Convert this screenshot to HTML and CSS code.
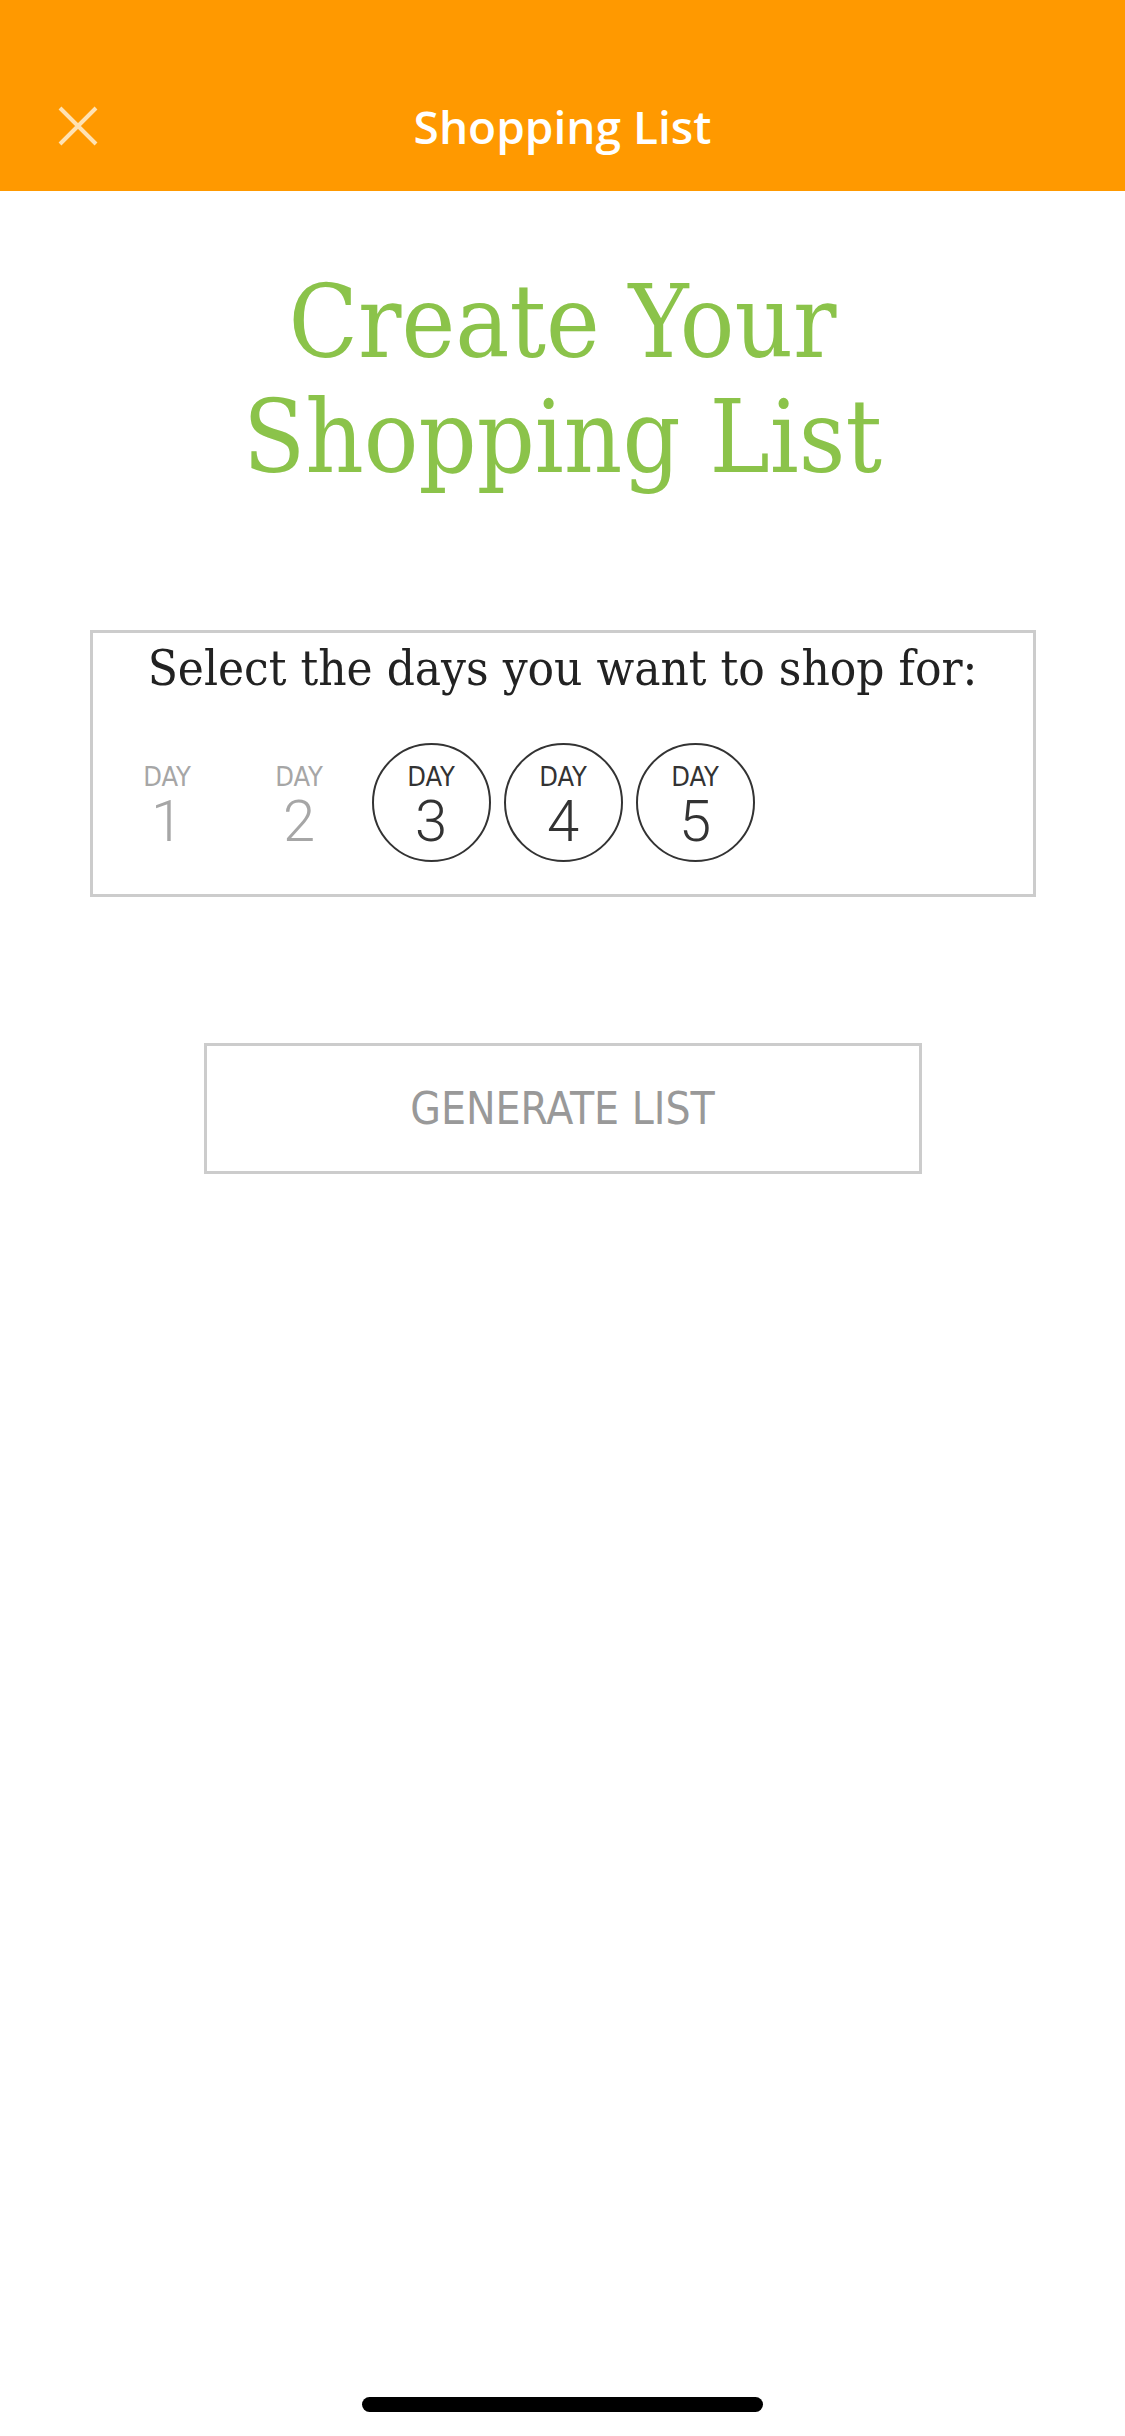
FILE: index.html
```html
<!DOCTYPE html>
<html lang="en">
<head>
<meta charset="utf-8">
<title>Shopping List</title>
<link rel="stylesheet" href="styles.css">
</head>
<body>
<div class="screen">
  <header class="topbar">
    <button class="close" aria-label="Close">
      <svg viewBox="0 0 42 42" width="42" height="42"><path d="M3 3 L39 39 M39 3 L3 39" stroke="currentColor" stroke-width="4" fill="none"/></svg>
    </button>
    <h1 class="topbar-title">Shopping List</h1>
    <span class="topbar-spacer"></span>
  </header>

  <main class="content">
    <h2 class="headline">Create Your<br>Shopping List</h2>

    <section class="days-card">
      <p class="days-prompt">Select the days you want to shop for:</p>
      <div class="days">
        <div class="day"><span class="day-label">DAY</span><span class="day-num">1</span></div>
        <div class="day"><span class="day-label">DAY</span><span class="day-num">2</span></div>
        <div class="day day-selected"><span class="day-label">DAY</span><span class="day-num">3</span></div>
        <div class="day day-selected"><span class="day-label">DAY</span><span class="day-num">4</span></div>
        <div class="day day-selected"><span class="day-label">DAY</span><span class="day-num">5</span></div>
      </div>
    </section>

    <button class="generate">GENERATE LIST</button>
  </main>

  <div class="home-indicator"></div>
</div>
</body>
</html>
```

FILE: styles.css
```css
* { box-sizing: border-box; }

html, body {
  margin: 0;
  padding: 0;
  background: #fff;
}

.screen {
  width: 1125px;
  min-height: 2436px;
  display: flex;
  flex-direction: column;
  background: #fff;
}

.topbar {
  height: 191px;
  padding-top: 60px;
  background: #FF9900;
  display: grid;
  grid-template-columns: 1fr auto 1fr;
  align-items: center;
}

.close {
  justify-self: start;
  display: flex;
  padding: 0 0 0 57px;
  margin: 0;
  border: none;
  background: none;
  color: #FFE2B3;
}

.topbar-title {
  margin: 0;
  font-family: "Open Sans", "Lato", sans-serif;
  font-weight: 600;
  font-size: 46px;
  line-height: 60px;
  color: #fff;
}

.content {
  display: flex;
  flex-direction: column;
  align-items: center;
}

.headline {
  margin: 74px 0 0;
  font-family: "DejaVu Serif Condensed", "DejaVu Serif", serif;
  font-weight: normal;
  font-size: 101px;
  line-height: 115px;
  color: #8BC34A;
  text-align: center;
}

.days-card {
  margin-top: 135px;
  width: 946px;
  height: 267px;
  border: 3px solid #CCCCCC;
  display: flex;
  flex-direction: column;
  align-items: flex-start;
}

.days-prompt {
  align-self: stretch;
  margin: 6px 0 0;
  font-family: "DejaVu Serif Condensed", "DejaVu Serif", serif;
  font-size: 49px;
  line-height: 60px;
  color: #222;
  text-align: center;
}

.days {
  display: flex;
  gap: 13px;
  margin-top: 44px;
  padding-left: 15px;
}

.day {
  width: 119px;
  height: 119px;
  padding-top: 6px;
  border: 2.5px solid transparent;
  border-radius: 50%;
  display: flex;
  flex-direction: column;
  align-items: center;
  justify-content: center;
  color: #A6A6A6;
}

.day-selected {
  border-color: #333;
  color: #333;
}

.day-label {
  margin-bottom: 3px;
  font-family: "DejaVu Sans Condensed", "DejaVu Sans", sans-serif;
  font-stretch: condensed;
  font-size: 27px;
  line-height: 28px;
}

.day-num {
  font-family: "Roboto", sans-serif;
  font-weight: 300;
  font-size: 58px;
  line-height: 55px;
}

.generate {
  margin-top: 146px;
  width: 718px;
  height: 131px;
  border: 3px solid #CCCCCC;
  background: #fff;
  font-family: "DejaVu Sans Condensed", "DejaVu Sans", sans-serif;
  font-stretch: condensed;
  font-size: 44px;
  color: #999;
  padding: 0;
}

.home-indicator {
  margin-top: auto;
  margin-bottom: 24px;
  align-self: center;
  width: 401px;
  height: 15px;
  border-radius: 8px;
  background: #000;
}
```
